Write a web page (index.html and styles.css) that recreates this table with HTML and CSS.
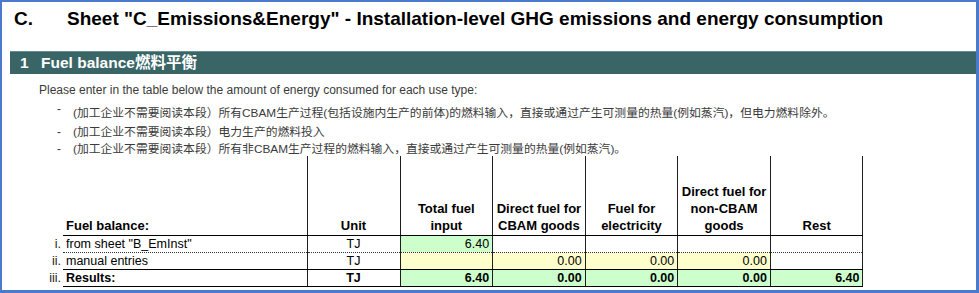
FILE: index.html
```html
<!DOCTYPE html>
<html>
<head>
<meta charset="utf-8">
<link rel="stylesheet" href="styles.css">
</head>
<body>
<div class="frame">
  <h1 class="title"><span class="title-letter">C.</span><span class="title-text">Sheet "C_Emissions&amp;Energy" - Installation-level GHG emissions and energy consumption</span></h1>
  <div class="band"><span class="band-num">1</span><span class="band-text">Fuel balance燃料平衡</span></div>
  <div class="intro">
    <p class="lead">Please enter in the table below the amount of energy consumed for each use type:</p>
    <ul class="bullets">
      <li class="b1"><span class="dash">-</span><span class="btext">(加工企业不需要阅读本段）所有CBAM生产过程(包括设施内生产的前体)的燃料输入，直接或通过产生可测量的热量(例如蒸汽)，但电力燃料除外。</span></li>
      <li class="b2"><span class="dash">-</span><span class="btext">(加工企业不需要阅读本段）电力生产的燃料投入</span></li>
      <li class="b3"><span class="dash">-</span><span class="btext">(加工企业不需要阅读本段）所有非CBAM生产过程的燃料输入，直接或通过产生可测量的热量(例如蒸汽)。</span></li>
    </ul>
  </div>
  <table class="fb">
    <colgroup>
      <col class="c-num"><col class="c-label"><col class="c-unit"><col class="c-val"><col class="c-val"><col class="c-val"><col class="c-val"><col class="c-val">
    </colgroup>
    <thead>
      <tr class="head">
        <th class="num"></th>
        <th class="label">Fuel balance:</th>
        <th>Unit</th>
        <th>Total fuel<br>input</th>
        <th>Direct fuel for<br>CBAM goods</th>
        <th>Fuel for<br>electricity</th>
        <th>Direct fuel for<br>non-CBAM<br>goods</th>
        <th>Rest</th>
      </tr>
    </thead>
    <tbody>
      <tr class="r1">
        <td class="num">i.</td>
        <td class="label">from sheet "B_EmInst"</td>
        <td class="unit">TJ</td>
        <td class="green">6.40</td>
        <td></td><td></td><td></td><td></td>
      </tr>
      <tr class="r2">
        <td class="num">ii.</td>
        <td class="label">manual entries</td>
        <td class="unit">TJ</td>
        <td class="yellow"></td>
        <td class="yellow">0.00</td>
        <td class="yellow">0.00</td>
        <td class="yellow">0.00</td>
        <td></td>
      </tr>
      <tr class="r3">
        <td class="num">iii.</td>
        <td class="label">Results:</td>
        <td class="unit">TJ</td>
        <td class="green">6.40</td>
        <td class="green">0.00</td>
        <td class="green">0.00</td>
        <td class="green">0.00</td>
        <td class="green">6.40</td>
      </tr>
    </tbody>
  </table>
</div>
</body>
</html>
```
FILE: styles.css
```css
html, body {
  margin: 0;
  padding: 0;
  background: #ffffff;
}
body {
  font-family: "Liberation Sans", Arial, "Noto Sans CJK SC", sans-serif;
  color: #000;
}
.frame {
  box-sizing: border-box;
  width: 979px;
  height: 293px;
  border-style: solid;
  border-color: #4a7acb;
  border-width: 2px 3px 3px 2px;
  overflow: hidden;
}
.title {
  margin: 6px 0 0 0;
  padding-left: 12px;
  font-size: 19px;
  line-height: 22px;
  font-weight: bold;
  display: flex;
  white-space: nowrap;
}
.title-letter {
  width: 53px;
}
.band {
  margin: 21px 0 0 8px;
  height: 23px;
  box-sizing: border-box;
  background: #3a6566;
  border-top: 1px solid #6c8d8e;
  color: #fff;
  font-weight: bold;
  font-size: 15.5px;
  line-height: 22px;
  display: flex;
  font-family: "Liberation Sans", Arial, "Noto Sans CJK SC", sans-serif;
}
.band-num {
  padding-left: 10px;
  width: 21px;
}
.intro {
  padding-left: 37px;
  color: #3a3a3a;
  font-size: 12px;
  line-height: 16px;
}
.lead {
  margin: 8px 0 0 0;
}
.bullets {
  list-style: none;
  margin: 0;
  padding: 0 0 0 18px;
}
.bullets li {
  display: flex;
  white-space: nowrap;
}
.dash {
  width: 16px;
}
.btext {
  font-size: 11.8px;
}
.b1 { margin-top: 7px; }
.b1 .dash { margin-top: -4px; }
.b2 { margin-top: 3px; }
.b3 { margin-top: 1px; }

.fb {
  margin: -1px 0 0 38px;
  border-collapse: collapse;
  table-layout: fixed;
  width: 823px;
  font-size: 12.5px;
}
.c-num { width: 23px; }
.c-label { width: 244px; }
.c-unit { width: 93px; }
.c-val { width: 92.6px; }
.fb th, .fb td {
  padding: 0 3px;
  border-right: 1px solid #1e1e1e;
  white-space: nowrap;
  overflow: hidden;
}
.fb th {
  font-size: 13px;
  font-weight: bold;
  line-height: 17px;
  vertical-align: bottom;
  text-align: center;
  height: 78px;
  padding-bottom: 1px;
  border-bottom: 1px solid #000;
}
.fb th.label {
  text-align: left;
}
.fb .num {
  border: none;
  text-align: right;
  padding: 0 2px 0 0;
  color: #222;
}
.fb td {
  height: 16px;
  line-height: 16px;
  text-align: right;
}
.fb td.label { text-align: left; }
.fb td.unit { text-align: center; }
.r1 td { border-bottom: 1px dotted #333; }
.r2 td, .r3 td { border-bottom: 1px solid #000; }
.r1 td.num, .r2 td.num, .r3 td.num { border-bottom: none; }
.r3 td { font-weight: bold; }
.r3 td.num { font-weight: normal; }
.green { background: #ccffcc; }
.yellow { background: #ffffcc; }
```
